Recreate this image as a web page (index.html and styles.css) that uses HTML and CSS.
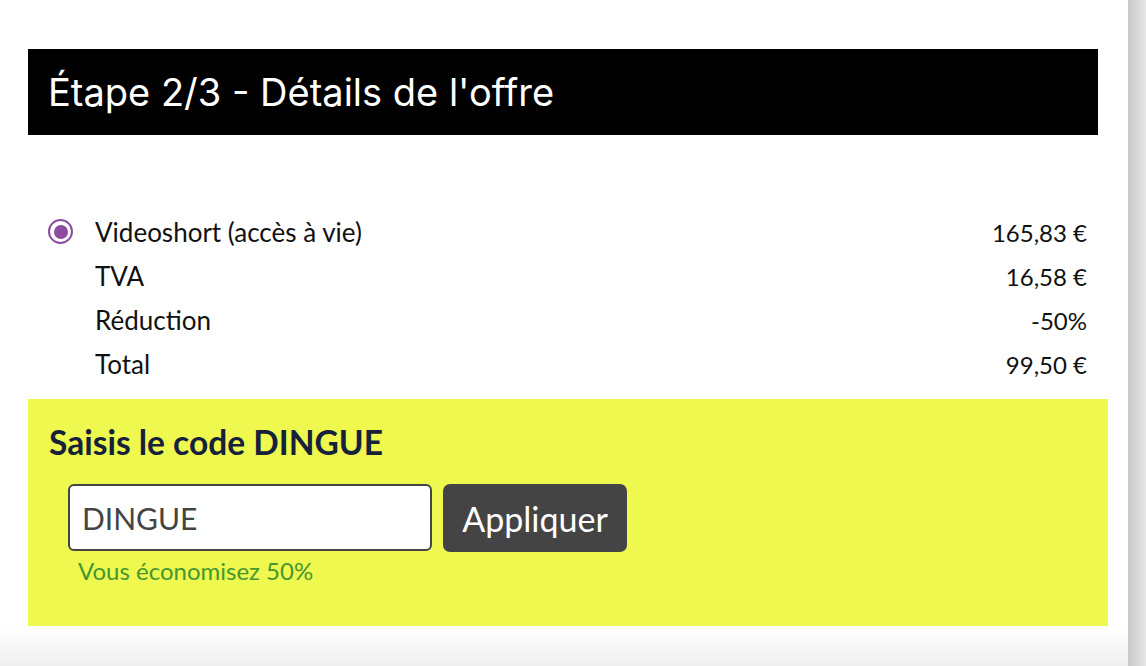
FILE: index.html
```html
<!DOCTYPE html>
<html lang="fr">
<head>
<meta charset="utf-8">
<link rel="stylesheet" href="styles.css">
</head>
<body>
<div class="page">
  <main class="main">
    <h1 class="step-title">Étape 2/3 - Détails de l'offre</h1>
    <div class="lines">
      <div class="line">
        <span class="radio"><span class="dot"></span></span>
        <span class="label">Videoshort (accès à vie)</span>
        <span class="amount">165,83 €</span>
      </div>
      <div class="line">
        <span class="label">TVA</span>
        <span class="amount">16,58 €</span>
      </div>
      <div class="line">
        <span class="label">Réduction</span>
        <span class="amount">-50%</span>
      </div>
      <div class="line">
        <span class="label">Total</span>
        <span class="amount">99,50 €</span>
      </div>
    </div>
    <section class="promo">
      <h2 class="promo-title">Saisis le code DINGUE</h2>
      <div class="promo-form">
        <input class="promo-input" type="text" value="DINGUE">
        <button class="promo-btn" type="button">Appliquer</button>
      </div>
      <p class="promo-msg">Vous économisez 50%</p>
    </section>
    <div class="fade"></div>
  </main>
  <div class="side-strip"></div>
</div>
</body>
</html>
```

FILE: styles.css
```css
* { box-sizing: border-box; }
html, body { margin: 0; padding: 0; background: #fff; }
body {
  font-family: Lato, "Noto Sans", sans-serif;
  color: #111;
  overflow: hidden;
}
.page {
  display: flex;
  width: 1146px;
  height: 666px;
}
.main {
  flex: 1;
  display: flex;
  flex-direction: column;
  padding-top: 49px;
}
.side-strip {
  width: 18px;
  background: linear-gradient(to right, #c9c9c9, #e6e6e6);
}
.step-title {
  margin: 0 30px 0 28px;
  height: 86px;
  background: #000;
  color: #fff;
  font-family: Inter, Roboto, sans-serif;
  font-weight: 400;
  font-size: 38px;
  line-height: 86px;
  padding-left: 20px;
}
.lines {
  margin: 75px 0 0 48px;
  width: 1039px;
}
.line {
  display: flex;
  align-items: center;
  height: 44px;
  padding-left: 47px;
  position: relative;
}
.label { flex: 1; font-size: 26px; }
.amount { text-align: right; font-size: 24px; }
.radio {
  position: absolute;
  left: 0;
  top: 9px;
  width: 25px;
  height: 25px;
  border: 2px solid #8c4aa0;
  border-radius: 50%;
  display: flex;
  align-items: center;
  justify-content: center;
}
.dot {
  width: 14px;
  height: 14px;
  border-radius: 50%;
  background: #8c4aa0;
}
.promo {
  margin: 13px 0 0 28px;
  width: 1080px;
  height: 227px;
  background: #eff84f;
  padding: 22px 21px 0;
}
.promo-title {
  margin: 0;
  font-size: 33.5px;
  font-weight: 700;
  line-height: 42px;
  color: #16213a;
}
.promo-form {
  display: flex;
  gap: 11px;
  margin: 21px 0 0 19px;
}
.promo-input {
  width: 364px;
  height: 67px;
  border: 2px solid #444;
  border-radius: 6px;
  background: #fff;
  font-family: Lato, "Noto Sans", sans-serif;
  font-size: 30px;
  color: #444;
  padding: 0 12px;
  outline: none;
}
.promo-btn {
  width: 184px;
  height: 68px;
  border: 0;
  border-radius: 7px;
  background: #444;
  color: #fff;
  font-family: Lato, "Noto Sans", sans-serif;
  font-size: 34px;
  padding: 0;
}
.promo-msg {
  margin: 5px 0 0 29px;
  font-size: 24px;
  line-height: 28px;
  color: #45972f;
}
.fade {
  flex: 1;
  background: linear-gradient(to bottom, #fff, #efefef);
}
```
